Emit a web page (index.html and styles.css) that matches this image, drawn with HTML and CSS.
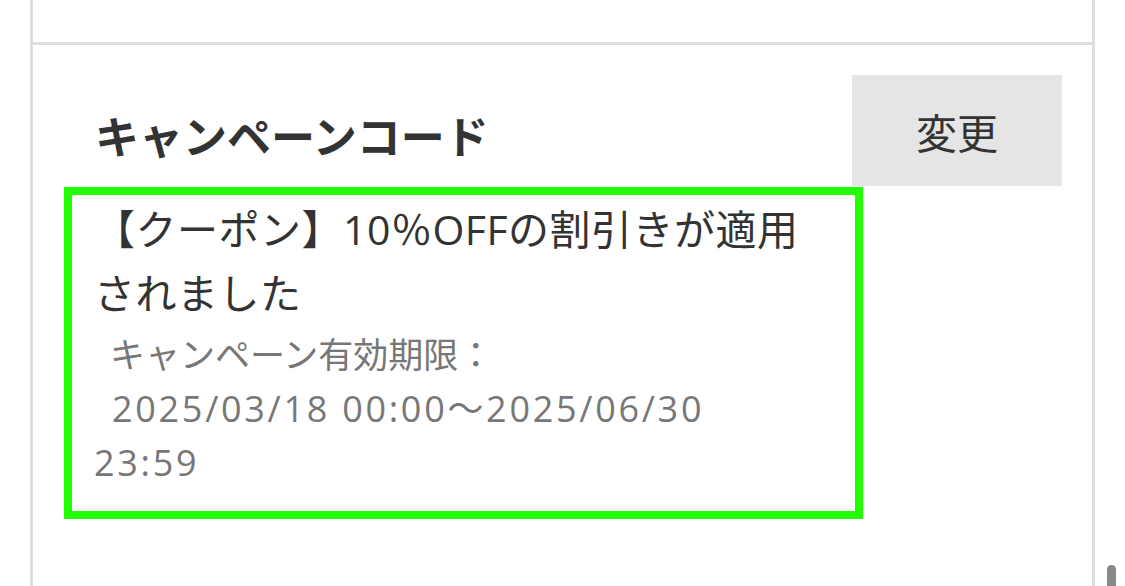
FILE: index.html
```html
<!DOCTYPE html>
<html lang="ja">

<head>
    <meta charset="UTF-8" />
    <meta name="viewport" content="width=device-width, initial-scale=1" />
    <title>キャンペーンコード</title>
    <link rel="stylesheet" href="styles.css">
</head>

<body>
    <div class="panel">
        <div class="panel-prev"></div>

        <section class="campaign">
            <div class="campaign-head">
                <h2 class="campaign-title">キャンペーンコード</h2>
                <button class="btn-change" type="button">変更</button>
            </div>

            <div class="coupon">
                <p class="coupon-text">【クーポン】10％OFFの割引きが適用されました</p>
                <div class="coupon-terms">
                    <p class="coupon-term">キャンペーン有効期限：</p>
                    <p class="coupon-term coupon-date">2025/03/18 00:00〜2025/06/30 23:59</p>
                </div>
            </div>
        </section>
    </div>

    <div class="scroll-thumb"></div>
</body>

</html>
```

FILE: styles.css
```css
* {
    margin: 0;
    padding: 0;
    box-sizing: border-box;
}

body {
    font-family: "Noto Sans CJK JP", "Noto Sans", sans-serif;
    background: #ffffff;
    color: #333333;
    height: 100vh;
    overflow: hidden;
}

/* 外枠（左右の罫線） */
.panel {
    margin-left: 30px;
    width: 1065px;
    min-height: 100vh;
    border-left: 3px solid #dddddd;
    border-right: 3px solid #dddddd;
}

/* 上のセクションの切れ端 */
.panel-prev {
    height: 42px;
}

.campaign {
    border-top: 3px solid #dddddd;
    padding: 30px 30px 0 31px;
}

.campaign-head {
    display: flex;
    justify-content: space-between;
    align-items: flex-start;
    margin-bottom: 1px;
}

.campaign-title {
    font-size: 44px;
    font-weight: bold;
    line-height: 66px;
    margin-top: 27px;
    padding-left: 31px;
    color: #333333;
}

.btn-change {
    width: 210px;
    height: 111px;
    border: none;
    background: #e5e5e5;
    color: #333333;
    font-family: inherit;
    font-size: 41px;
    cursor: pointer;
}

/* 適用済みクーポン */
.coupon {
    width: 799px;
    border: 8px solid #22ff00;
    padding: 2px 46px 21px 22px;
}

/* 英数字は少し幅のある書体で */
.coupon-text,
.coupon-term {
    font-family: "Open Sans", "Noto Sans CJK JP", sans-serif;
}

.coupon-text {
    font-size: 41px;
    line-height: 64px;
    letter-spacing: 0.5px;
    color: #333333;
}

.coupon-terms {
    margin-top: 3px;
}

.coupon-term {
    font-size: 35px;
    line-height: 54px;
    text-indent: 16px;
    color: #777777;
}

.coupon-date {
    font-size: 36px;
    letter-spacing: 2.7px;
    text-indent: 18px;
}

.scroll-thumb {
    position: fixed;
    left: 1107px;
    top: 565px;
    width: 9px;
    height: 40px;
    border-radius: 5px;
    background: #888888;
}
```
